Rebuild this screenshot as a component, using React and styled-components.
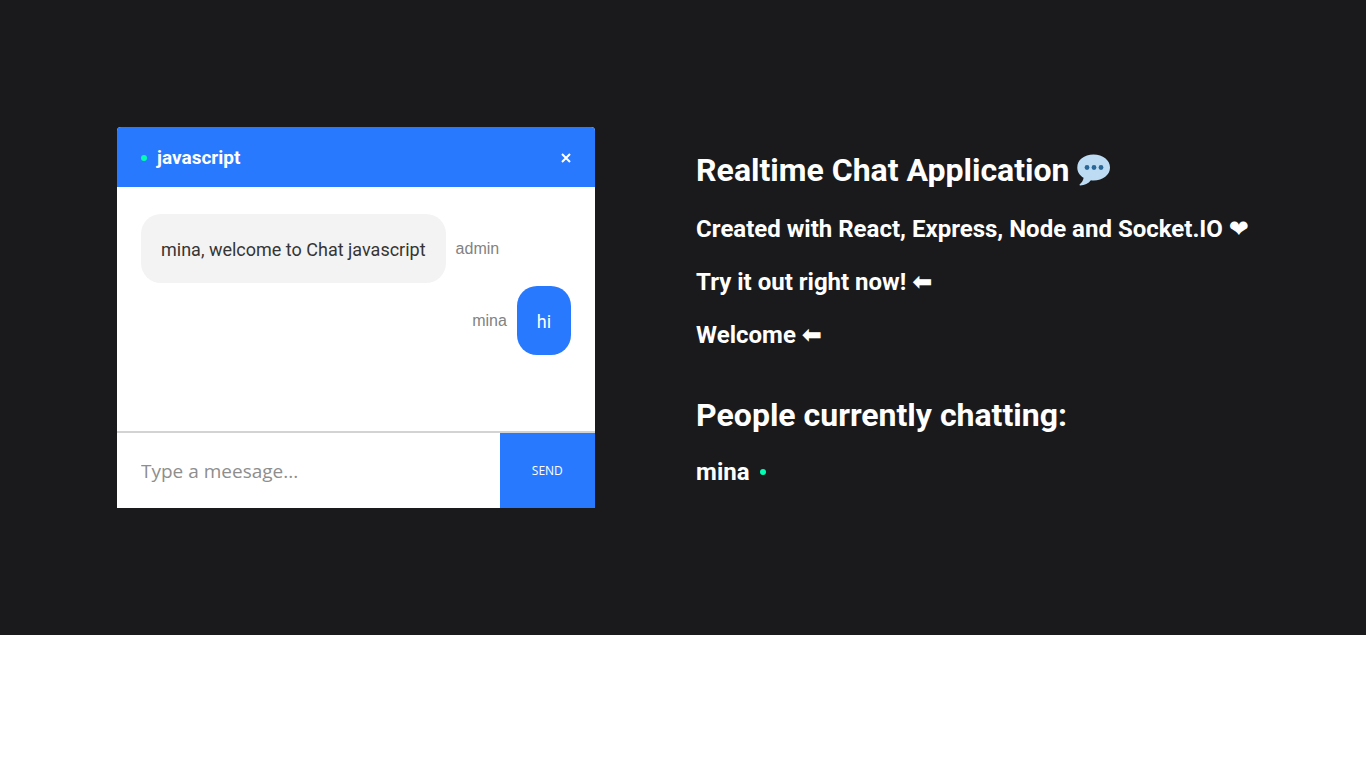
import React from "react";
import styled, { createGlobalStyle } from "styled-components";

const GlobalStyle = createGlobalStyle`
  * { box-sizing: border-box; }
  body {
    margin: 0;
    background: #ffffff;
    font-family: Roboto, "Liberation Sans", "DejaVu Sans", sans-serif;
  }
`;

const Page = styled.main`
  display: flex;
  justify-content: center;
  align-items: stretch;
  padding: 127px 16px;
  background: #1a1a1d;
`;

const ChatPanel = styled.section`
  display: flex;
  flex-direction: column;
  flex-shrink: 0;
  width: 35vw;
  min-height: 381px;
  background: #ffffff;
  border-radius: 4px 4px 0 0;
`;

const InfoBar = styled.header`
  display: flex;
  align-items: center;
  gap: 10px;
  height: 60px;
  padding: 2px 24px 0;
  background: #2979ff;
  border-radius: 4px 4px 0 0;
  color: #ffffff;
`;

const RoomName = styled.h3`
  flex: 1;
  margin: 0;
  font-size: 19px;
  line-height: 22px;
  font-weight: 700;
`;

const OnlineDot = styled.span`
  width: 6px;
  height: 6px;
  border-radius: 50%;
  background: #00ffb3;
`;

const CloseLink = styled.a`
  display: flex;
  color: #ffffff;
`;

const Messages = styled.div`
  display: flex;
  flex-direction: column;
  flex: 1;
  gap: 3px;
  padding: 27px 24px;
`;

const MessageRow = styled.div`
  display: flex;
  align-items: center;
  gap: 10px;
  justify-content: ${(p) => (p.$own ? "flex-end" : "flex-start")};
`;

const Bubble = styled.p`
  max-width: 80%;
  margin: 0;
  padding: 24px 20px 21px;
  border-radius: 20px;
  font-size: 18px;
  line-height: 24px;
  background: ${(p) => (p.$own ? "#2979ff" : "#f3f3f3")};
  color: ${(p) => (p.$own ? "#ffffff" : "#353535")};
`;

const Sender = styled.span`
  font-family: "Liberation Sans", Helvetica, sans-serif;
  font-size: 16px;
  line-height: 18px;
  color: #828282;
`;

const Form = styled.form`
  display: flex;
  height: 77px;
  border-top: 2px solid #d3d3d3;
`;

const MessageInput = styled.input`
  flex: 4;
  min-width: 0;
  padding: 0 24px;
  border: none;
  outline: none;
  background: #ffffff;
  font-family: "Open Sans", sans-serif;
  font-size: 19px;
  &::placeholder {
    color: #8e8e8e;
    opacity: 1;
  }
`;

const SendButton = styled.button`
  flex: 0 0 20%;
  padding: 0;
  border: none;
  background: #2979ff;
  color: #ffffff;
  font-family: "Open Sans", sans-serif;
  font-size: 12px;
  text-transform: uppercase;
`;

const InfoColumn = styled.section`
  display: flex;
  flex-direction: column;
  gap: 46px;
  margin-left: 101px;
  padding-top: 23px;
  color: #ffffff;
`;

const Group = styled.div`
  display: flex;
  flex-direction: column;
  gap: ${(p) => (p.$tight ? "23px" : "25px")};
`;

const Title = styled.h1`
  margin: 0;
  font-size: 32px;
  line-height: 40px;
`;

const Line = styled.h2`
  margin: 0;
  font-size: 24px;
  line-height: 28px;
`;

const Person = styled(Line)`
  display: flex;
  align-items: center;
  gap: 10px;
`;

const BubbleDrawing = styled.svg`
  vertical-align: -5px;
`;

const SpeechIcon = () => (
  <BubbleDrawing width="34" height="32" viewBox="0 0 34 32" role="img" aria-label="speech balloon">
    <path
      d="M16.500.5C7 .5.300 6 .300 13.500c0 4.500 2.500 8 6.300 10.300-.300 2.500-1.600 4.800-3.800 6.500-.600.500-.300 1.100.400 1.100 4.300-.300 8.300-1.900 10.700-5.200.900.100 1.700.200 2.600.200 9.500 0 16.500-5.500 16.500-12.900S26 .5 16.500.5z"
      fill="#bddcf3"
    />
    <circle cx="10" cy="13.500" r="2.400" fill="#2a6797" />
    <circle cx="17" cy="13.500" r="2.400" fill="#2a6797" />
    <circle cx="24" cy="13.500" r="2.400" fill="#2a6797" />
  </BubbleDrawing>
);

const CloseIcon = () => (
  <svg width="10" height="10" viewBox="0 0 10 10" aria-hidden="true">
    <path d="M1 1l8 8M9 1L1 9" stroke="currentColor" strokeWidth="2" />
  </svg>
);

const messages = [
  { user: "admin", text: "mina, welcome to Chat javascript" },
  { user: "mina", text: "hi", own: true },
];

function Message({ user, text, own }) {
  return (
    <MessageRow $own={own}>
      {own && <Sender>{user}</Sender>}
      <Bubble $own={own}>{text}</Bubble>
      {!own && <Sender>{user}</Sender>}
    </MessageRow>
  );
}

export default function App() {
  return (
    <>
      <GlobalStyle />
      <Page>
        <ChatPanel>
          <InfoBar>
            <OnlineDot />
            <RoomName>javascript</RoomName>
            <CloseLink href="/" aria-label="Close">
              <CloseIcon />
            </CloseLink>
          </InfoBar>
          <Messages>
            {messages.map((m) => (
              <Message key={m.text} {...m} />
            ))}
          </Messages>
          <Form onSubmit={(e) => e.preventDefault()}>
            <MessageInput type="text" placeholder="Type a meesage..." aria-label="Message" />
            <SendButton type="submit">Send</SendButton>
          </Form>
        </ChatPanel>
        <InfoColumn>
          <Group>
            <Title>
              Realtime Chat Application <SpeechIcon />
            </Title>
            <Line>Created with React, Express, Node and Socket.IO ❤</Line>
            <Line>Try it out right now! ⬅</Line>
            <Line>Welcome ⬅</Line>
          </Group>
          <Group $tight>
            <Title>People currently chatting:</Title>
            <Person>
              mina
              <OnlineDot />
            </Person>
          </Group>
        </InfoColumn>
      </Page>
    </>
  );
}
